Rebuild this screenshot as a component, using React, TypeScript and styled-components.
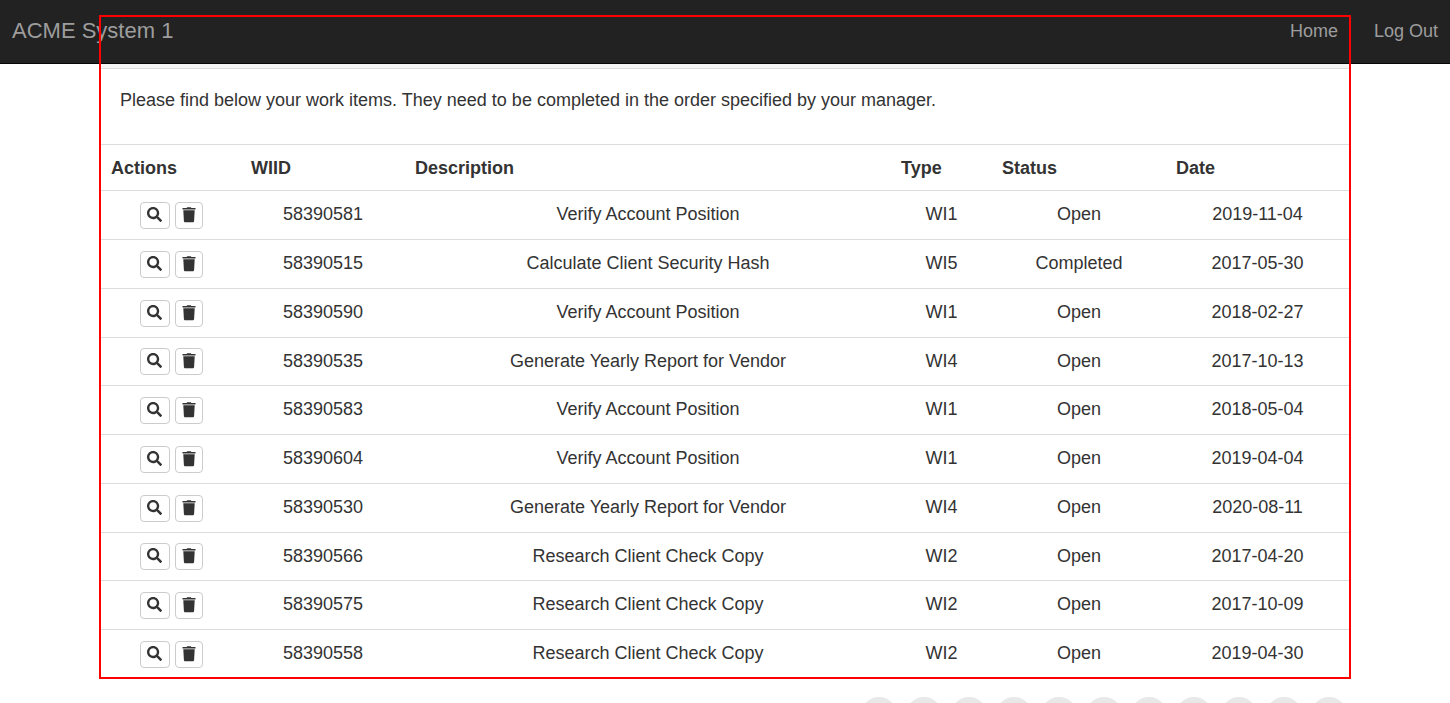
import React from "react";
import styled, { createGlobalStyle } from "styled-components";
import { FaSearch } from "react-icons/fa";

const GlobalStyle = createGlobalStyle`
  *, *::before, *::after { box-sizing: border-box; }
  body {
    margin: 0;
    background: #fff;
    color: #333;
    font-family: "Liberation Sans", Arial, sans-serif;
    font-size: 18px;
    line-height: 24px;
  }
`;

const Page = styled.div`
  height: 100vh;
  overflow: hidden;
`;

const Navbar = styled.nav`
  display: flex;
  align-items: center;
  justify-content: space-between;
  min-height: 64px;
  padding: 0 12px 2px;
  background: #222;
  border-bottom: 1px solid #080808;
`;

const NavLinks = styled.div`
  display: flex;
  gap: 36px;
`;

const NavLink = styled.a<{ $brand?: boolean }>`
  color: #9d9d9d;
  font-size: ${(p) => (p.$brand ? 22 : 18)}px;
  text-decoration: none;
`;

const Main = styled.main`
  position: relative;
  margin: 0 99px;
  padding: 0 2px;
`;

/* Red outline drawn over the navbar and the work item panel. */
const Highlight = styled.div`
  position: absolute;
  inset: -49px 0 -1px;
  border: 2px solid #f00;
  pointer-events: none;
`;

const PanelHeading = styled.div`
  height: 5px;
  background: #f5f5f5;
  border-bottom: 1px solid #ddd;
`;

const Intro = styled.p`
  margin: 0;
  padding: 19px 19px 32px;
`;

const ItemTable = styled.table`
  width: 100%;
  table-layout: fixed;
  border-collapse: separate;
  border-spacing: 0;
`;

const Col = styled.col<{ $width?: number }>`
  width: ${(p) => (p.$width ? `${p.$width}px` : "auto")};
`;

const HeadCell = styled.th`
  height: 46px;
  padding: 0 10px;
  border-top: 1px solid #ddd;
  text-align: left;
  font-weight: bold;
`;

const Cell = styled.td`
  height: 49px;
  padding: 0 10px 2px;
  border-top: 1px solid #ddd;
  text-align: center;

  tr:nth-child(4n) > & {
    height: 48px;
  }
`;

const Actions = styled.div`
  display: flex;
  justify-content: center;
  gap: 5px;
  padding-top: 2px;
`;

const IconButton = styled.button<{ $width: number }>`
  display: flex;
  align-items: flex-start;
  justify-content: center;
  width: ${(p) => p.$width}px;
  height: 27px;
  padding: 4px 0 0;
  border: 1px solid #ccc;
  border-radius: 4px;
  background: #fff;
  color: #333;
  cursor: pointer;
`;

const Pagination = styled.nav`
  display: flex;
  justify-content: flex-end;
  gap: 9px;
  margin: 19px 103px 0;
`;

const PageButton = styled.button`
  flex: none;
  width: 36px;
  height: 36px;
  padding: 0;
  border: 0;
  border-radius: 50%;
  background: #e8e8e8;
  cursor: pointer;
`;

const TrashIcon = () => (
  <svg width="14" height="16" viewBox="0 0 14 16" fill="currentColor" aria-hidden="true">
    <path d="M4.6 1 5.2.2h3.6l.6.8h4.1v1.6H.5V1z" />
    <path d="M1.300 3.200h11.400l-.6 10.700c0 .8-.7 1.400-1.500 1.400H3.400c-.8 0-1.500-.6-1.500-1.400z" />
  </svg>
);

const columns = [
  { label: "Actions", width: 140 },
  { label: "WIID", width: 164 },
  { label: "Description" },
  { label: "Type", width: 101 },
  { label: "Status", width: 174 },
  { label: "Date", width: 183 },
];

const items = [
  ["58390581", "Verify Account Position", "WI1", "Open", "2019-11-04"],
  ["58390515", "Calculate Client Security Hash", "WI5", "Completed", "2017-05-30"],
  ["58390590", "Verify Account Position", "WI1", "Open", "2018-02-27"],
  ["58390535", "Generate Yearly Report for Vendor", "WI4", "Open", "2017-10-13"],
  ["58390583", "Verify Account Position", "WI1", "Open", "2018-05-04"],
  ["58390604", "Verify Account Position", "WI1", "Open", "2019-04-04"],
  ["58390530", "Generate Yearly Report for Vendor", "WI4", "Open", "2020-08-11"],
  ["58390566", "Research Client Check Copy", "WI2", "Open", "2017-04-20"],
  ["58390575", "Research Client Check Copy", "WI2", "Open", "2017-10-09"],
  ["58390558", "Research Client Check Copy", "WI2", "Open", "2019-04-30"],
];

const pages = Array.from({ length: 11 }, (_, i) => i + 1);

export default function App() {
  return (
    <Page>
      <GlobalStyle />
      <Navbar>
        <NavLink href="#" $brand>ACME System 1</NavLink>
        <NavLinks>
          <NavLink href="#home">Home</NavLink>
          <NavLink href="#logout">Log Out</NavLink>
        </NavLinks>
      </Navbar>
      <Main>
        <PanelHeading />
        <Intro>
          Please find below your work items. They need to be completed in the order specified by your manager.
        </Intro>
        <ItemTable>
          <colgroup>
            {columns.map((c) => <Col key={c.label} $width={c.width} />)}
          </colgroup>
          <thead>
            <tr>
              {columns.map((c) => <HeadCell key={c.label} scope="col">{c.label}</HeadCell>)}
            </tr>
          </thead>
          <tbody>
            {items.map((item) => (
              <tr key={item[0]}>
                <Cell>
                  <Actions>
                    <IconButton $width={30} type="button" aria-label={`View ${item[0]}`}>
                      <FaSearch size={15} />
                    </IconButton>
                    <IconButton $width={28} type="button" aria-label={`Delete ${item[0]}`}>
                      <TrashIcon />
                    </IconButton>
                  </Actions>
                </Cell>
                {item.map((value, i) => <Cell key={i}>{value}</Cell>)}
              </tr>
            ))}
          </tbody>
        </ItemTable>
        <Highlight />
      </Main>
      <Pagination aria-label="Pages">
        {pages.map((n) => <PageButton key={n} type="button" aria-label={`Page ${n}`} />)}
      </Pagination>
    </Page>
  );
}
